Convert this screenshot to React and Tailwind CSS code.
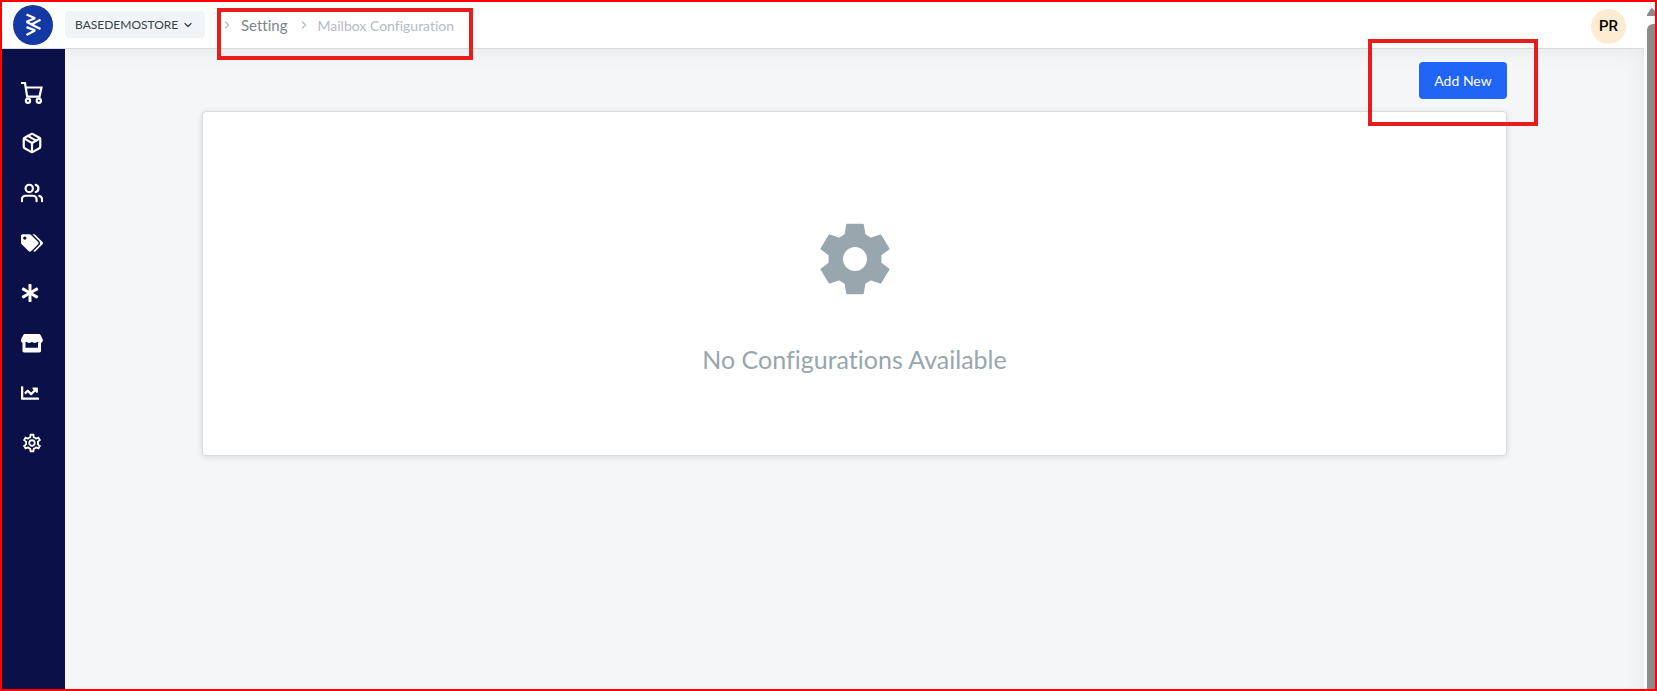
import { FaAsterisk, FaChartLine, FaTags } from "react-icons/fa";
import { FiPackage, FiUsers } from "react-icons/fi";
import { MdOutlineSettings } from "react-icons/md";
import { ChevronDown, ChevronRight } from "lucide-react";

function Logo() {
  return (
    <svg viewBox="0 0 40 40" className="size-10" aria-hidden="true">
      <circle cx="20" cy="20" r="20" fill="#1539a3" />
      <g fill="none" stroke="#fff" strokeWidth="2.3" strokeLinejoin="bevel">
        <path d="M13.500 9.500 22 13.200 13.500 16.800" />
        <path d="M27.500 14.800 18.500 19.400 27.500 24" />
        <path d="M13.500 16.800 18.500 19.400" />
        <path d="M13.500 22.200 22 25.400 13.500 30" />
      </g>
    </svg>
  );
}

function CartIcon() {
  return (
    <svg viewBox="0 0 24 24" className="size-6" fill="none" stroke="currentColor" strokeWidth="2.200" aria-hidden="true">
      <path d="M1 2h4l2.200 13.600h12.300L21.500 6.500H6" />
      <circle cx="8" cy="19.800" r="2.100" />
      <circle cx="18.800" cy="19.800" r="2.100" />
    </svg>
  );
}

function StoreIcon() {
  return (
    <svg viewBox="0 0 24 24" className="size-6" fill="currentColor" aria-hidden="true">
      <path d="M5 3h13.500c1.200 0 1.800.4 2.300 1.400l1.800 3.600c.8 2-.4 4-2.400 4-1.300 0-2-.5-2.700-1.200-.7.7-1.600 1.200-2.800 1.200s-2.100-.5-2.800-1.200c-.7.7-1.600 1.200-2.800 1.200s-2.100-.5-2.800-1.200c-.7.7-1.500 1.200-2.700 1.200-2.200 0-3.200-2-2.400-4l1.900-3.600c.5-1 1-1.400 1.900-1.400Z" />
      <path d="M2.500 11.500h3v5.300h12.500v-5.300h3v8.300c0 1.200-.6 1.700-1.700 1.700H4.200c-1.100 0-1.700-.5-1.700-1.700Z" />
    </svg>
  );
}

function GearIcon() {
  return (
    <svg viewBox="-36 -36 72 72" className="size-[72px]" aria-hidden="true">
      <path
        fill="#98a6ad"
        stroke="#98a6ad"
        strokeWidth="2"
        strokeLinejoin="round"
        fillRule="evenodd"
        d="M-7.800-34.300H7.800L9.500-24.200 15.800-20.200 25.500-23.600 33.500-10.200 25.400-4.200V4.200L33.500 10.200 25.500 23.600 15.800 20.200 9.500 24.200 7.800 34.300H-7.800L-9.500 24.200-15.800 20.200-25.500 23.600-33.500 10.200-25.400 4.200V-4.200L-33.500-10.200-25.500-23.600-15.800-20.200-9.500-24.200ZM13 0A13 13 0 1 0-13 0A13 13 0 1 0 13 0Z"
      />
    </svg>
  );
}

const links = [
  { label: "Orders", icon: <CartIcon /> },
  { label: "Products", icon: <FiPackage className="size-[22px]" strokeWidth={2.4} /> },
  { label: "Customers", icon: <FiUsers className="size-[22px]" strokeWidth={2.4} /> },
  { label: "Promotions", icon: <FaTags className="size-[22px]" /> },
  { label: "Content", icon: <FaAsterisk className="mr-1 size-[18px]" /> },
  { label: "Store", icon: <StoreIcon /> },
  { label: "Analytics", icon: <FaChartLine className="mr-1 size-[18px]" /> },
  { label: "Settings", icon: <MdOutlineSettings className="size-[22px]" /> },
];

function Highlight({ className }) {
  return <div className={`pointer-events-none absolute z-10 border-4 border-[#e71c1c] ${className}`} />;
}

function Header() {
  return (
    <header className="flex h-[47px] items-start border-b border-[#d8dbde] bg-white">
      <a href="#home" aria-label="Home" className="flex w-[63px] justify-center pr-0.5 pt-[3px]">
        <Logo />
      </a>
      <button
        type="button"
        className="mt-[9px] flex h-[27px] w-[140px] items-center gap-1 rounded-sm bg-[#f0f4f7] pl-[10px] text-[12px] text-[#36424a]"
      >
        BASEDEMOSTORE
        <ChevronDown className="size-3" strokeWidth={2.5} />
      </button>
      <nav aria-label="Breadcrumb" className="relative ml-3 h-full w-64 shrink-0">
        <ol className="flex h-[46px] items-center gap-[10px] pl-1 text-[15px]">
          <li className="flex items-center gap-2 text-[#7b858d]">
            <ChevronRight className="size-3 text-[#b5bdc5]" strokeWidth={2.5} />
            <a href="#setting">Setting</a>
          </li>
          <li className="flex items-center gap-2 text-[#b3bbc4]">
            <ChevronRight className="size-3" strokeWidth={2.5} />
            <span className="text-[14px]">Mailbox Configuration</span>
          </li>
        </ol>
        <Highlight className="left-0 top-[6px] h-[52px] w-full" />
      </nav>
      <button
        type="button"
        aria-label="Account"
        className="ml-auto mr-[18px] mt-[7px] size-[35px] rounded-full bg-[#fdecd2] font-[Roboto] text-[15px] font-medium text-black"
      >
        PR
      </button>
    </header>
  );
}

export default function App() {
  return (
    <div className="flex min-h-screen border-2 border-[#ff0000] bg-white font-[Lato,sans-serif] [font-variant-ligatures:none]">
      <div className="flex min-w-0 flex-1 flex-col">
        <Header />
        <div className="flex flex-1">
          <aside className="w-[63px] shrink-0 bg-[#0b1148] pt-[19px] text-white">
            <nav aria-label="Main">
              {links.map((link) => (
                <a
                  key={link.label}
                  href={`#${link.label.toLowerCase()}`}
                  aria-label={link.label}
                  className="flex h-[50px] items-center justify-center pr-1"
                >
                  {link.icon}
                </a>
              ))}
            </nav>
          </aside>
          <main className="flex-1 bg-[#f4f6f8] shadow-[inset_-12px_12px_24px_-14px_rgba(0,0,0,0.08)]">
            <div className="mx-auto w-full max-w-[1305px] pt-[13px]">
              <div className="relative mb-3 flex justify-end">
                <button
                  type="button"
                  className="h-[37px] w-[88px] rounded-sm bg-[#2065f5] text-[14px] text-white"
                >
                  Add New
                </button>
                <Highlight className="-right-[31px] -top-[23px] h-[87px] w-[170px]" />
              </div>
              <section className="flex flex-col items-center rounded border border-[#d9dcdf] bg-white pb-[78px] pt-[111px] shadow-[0_1px_6px_rgba(0,0,0,0.12)]">
                <GearIcon />
                <p className="mt-[46px] text-[25px] leading-9 text-[#98a6ad]">No Configurations Available</p>
              </section>
            </div>
          </main>
        </div>
      </div>
      <div aria-hidden="true" className="flex w-[11px] shrink-0 flex-col bg-[#fcfcfc] pl-[3px]">
        <svg viewBox="0 0 8 8" className="mb-2 mt-[6px] size-2" fill="#8b8b8b">
          <path d="M5 0 8 3V8H0V6.500L4 .5Z" />
        </svg>
        <div className="flex-1 rounded-tl-md bg-[#8b8b8b]" />
      </div>
    </div>
  );
}
